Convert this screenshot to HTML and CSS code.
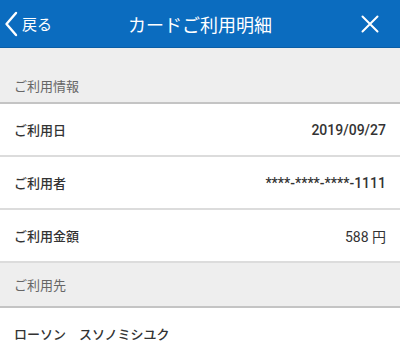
FILE: index.html
```html
<!DOCTYPE html>
<html lang="ja">
<head>
<meta charset="utf-8">
<link rel="stylesheet" href="styles.css">
</head>
<body>
<header class="bar">
  <a class="back">
    <svg class="chev" width="14" height="26" viewBox="0 0 14 26"><path d="M12 2 L2.5 13 L12 24" fill="none" stroke="#fff" stroke-width="2.4" stroke-linecap="round" stroke-linejoin="round"/></svg>
    <span>戻る</span>
  </a>
  <h1 class="title">カードご利用明細</h1>
  <svg class="close" width="18" height="18" viewBox="0 0 18 18"><path d="M1.5 1.5 L16.5 16.5 M16.5 1.5 L1.5 16.5" stroke="#fff" stroke-width="2" stroke-linecap="round"/></svg>
</header>
<div class="sec sec-first">ご利用情報</div>
<div class="row"><span class="lbl">ご利用日</span><span class="val">2019/09/27</span></div>
<div class="row"><span class="lbl">ご利用者</span><span class="val">****-****-****-1111</span></div>
<div class="row"><span class="lbl">ご利用金額</span><span class="val val-reg">588 円</span></div>
<div class="sec">ご利用先</div>
<div class="row row-last"><span class="lbl">ローソン　スソノミシユク</span></div>
</body>
</html>
```
FILE: styles.css
```css
html, body {
  margin: 0;
  padding: 0;
  background: #fff;
  font-family: "Noto Sans CJK JP", "Noto Sans", sans-serif;
  color: #333;
}
.bar {
  height: 47px;
  background: #0b6cbf;
  border-bottom: 1px solid #0a5ea6;
  display: flex;
  align-items: center;
  position: relative;
}
.back {
  display: flex;
  align-items: center;
  gap: 4px;
  padding-left: 4px;
  color: #fff;
  font-size: 15px;
}
.chev { display: block; }
.title {
  position: absolute;
  left: 0;
  right: 0;
  text-align: center;
  margin: 0;
  font-size: 18px;
  font-weight: normal;
  color: #fff;
  pointer-events: none;
}
.close {
  margin-left: auto;
  margin-right: 21px;
  display: block;
}
.sec {
  background: #eeeeee;
  color: #666;
  font-size: 13px;
  display: flex;
  align-items: center;
  padding: 0 14px;
  height: 43px;
  border-bottom: 2px solid #c4c4c4;
}
.sec-first {
  height: 48px;
  align-items: flex-end;
  line-height: 20px;
  padding-bottom: 6px;
}
.row {
  height: 51px;
  display: flex;
  align-items: center;
  justify-content: space-between;
  padding: 0 14px;
  border-bottom: 2px solid #dcdcdc;
  font-size: 13px;
  font-weight: 500;
}
.val {
  font-family: Roboto, "Noto Sans CJK JP", sans-serif;
  font-size: 14px;
  font-weight: 500;
}
.row-last { border-bottom: none; }
.val-reg { font-weight: normal; }
```
